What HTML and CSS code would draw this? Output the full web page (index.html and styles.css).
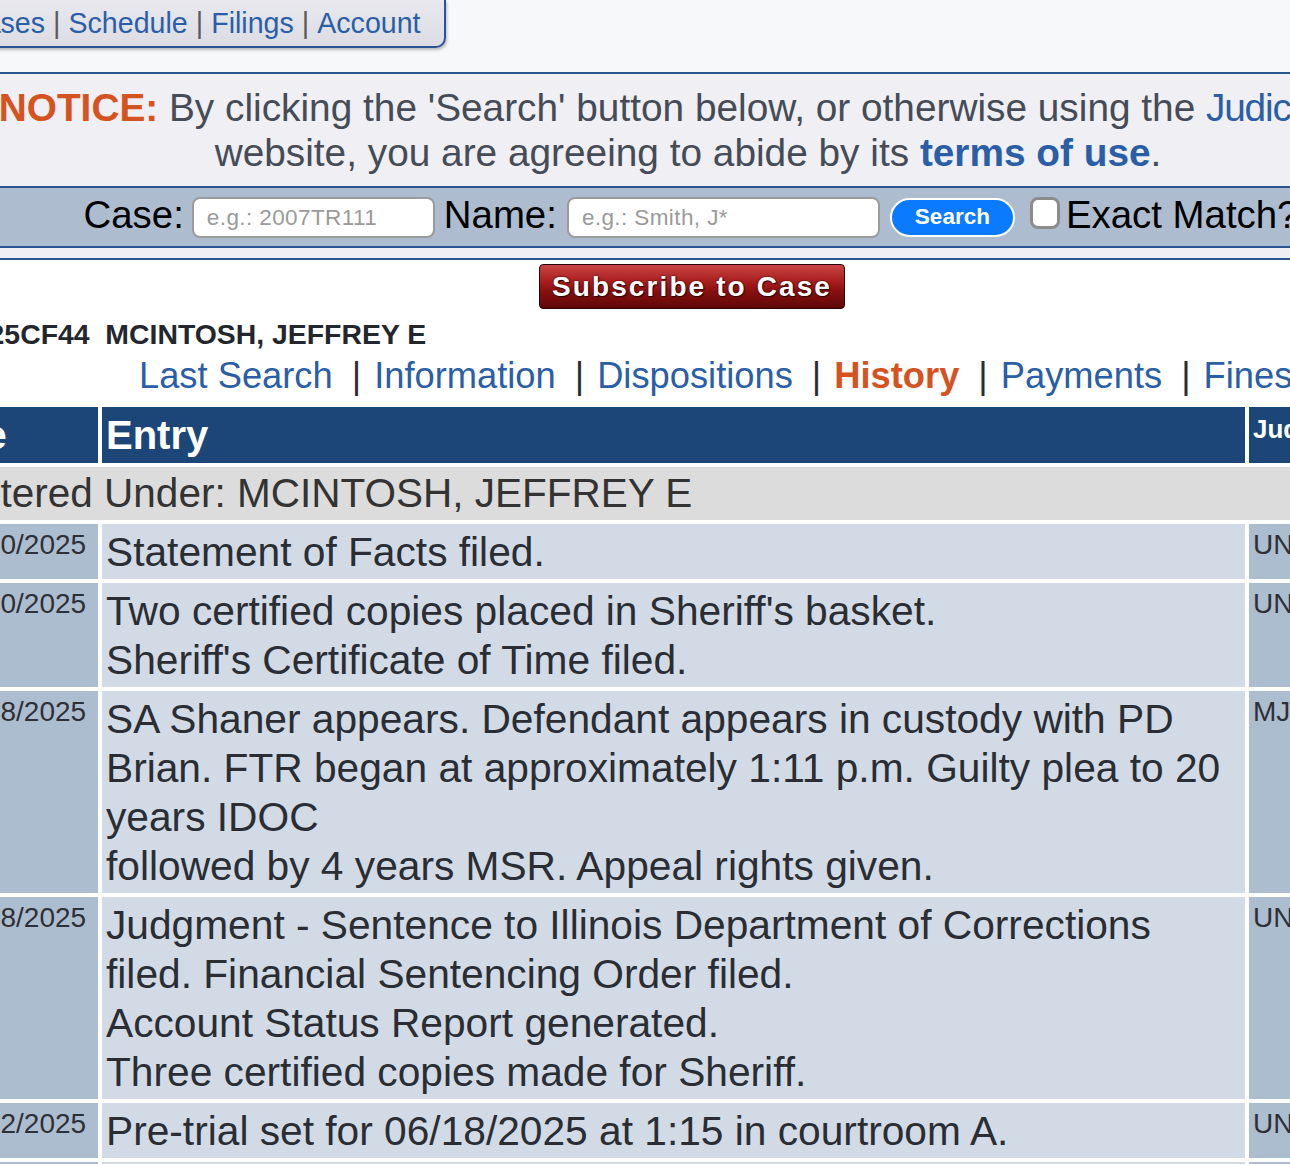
FILE: index.html
```html
<!DOCTYPE html>
<html lang="en">
<head>
<meta charset="utf-8">
<title>Case History</title>
<link rel="stylesheet" href="styles.css">
</head>
<body>
<div class="viewport">
  <div class="page">
    <div class="topbar">
      <div class="tab">
        <a class="toplink">Cases</a><span class="topsep">|</span><a class="toplink">Schedule</a><span class="topsep">|</span><a class="toplink">Filings</a><span class="topsep">|</span><a class="toplink">Account</a>
      </div>
    </div>

    <div class="notice">
      <span class="notice-label">NOTICE:</span> By clicking the 'Search' button below, or otherwise using the <a class="notice-link">Judici.com</a><br>
      website, you are agreeing to abide by its <a class="notice-terms">terms of use</a>.
    </div>

    <form class="searchbar">
      <label class="search-label" for="case">Case:</label>
      <input class="field field-case" id="case" type="text" placeholder="e.g.: 2007TR111">
      <label class="search-label" for="name">Name:</label>
      <input class="field field-name" id="name" type="text" placeholder="e.g.: Smith, J*">
      <button class="search-btn" type="button">Search</button>
      <input class="exact-check" id="exact" type="checkbox">
      <label class="search-label exact-label" for="exact">Exact Match?</label>
    </form>
    <div class="spacer"></div>

    <div class="content">
      <div class="subscribe-row">
        <span class="subscribe">Subscribe to Case</span>
      </div>
      <div class="caseline">2025CF44&nbsp;&nbsp;MCINTOSH, JEFFREY E</div>
      <nav class="casetabs">
        <a class="casetab">Last Search</a><span class="sep">|</span><a class="casetab">Information</a><span class="sep">|</span><a class="casetab">Dispositions</a><span class="sep">|</span><a class="casetab active">History</a><span class="sep">|</span><a class="casetab">Payments</a><span class="sep">|</span><a class="casetab">Fines</a>
      </nav>

      <table class="history">
        <thead>
          <tr>
            <th class="th-date">Date</th>
            <th class="th-entry">Entry</th>
            <th class="th-judge">Judge</th>
          </tr>
        </thead>
        <tbody>
          <tr class="entered">
            <td colspan="3">Entered Under: MCINTOSH, JEFFREY E</td>
          </tr>
          <tr>
            <td class="date">06/10/2025</td>
            <td class="entry">Statement of Facts filed.</td>
            <td class="judge">UNK</td>
          </tr>
          <tr>
            <td class="date">06/10/2025</td>
            <td class="entry">Two certified copies placed in Sheriff's basket.<br>Sheriff's Certificate of Time filed.</td>
            <td class="judge">UNK</td>
          </tr>
          <tr>
            <td class="date">06/18/2025</td>
            <td class="entry">SA Shaner appears. Defendant appears in custody with PD<br>Brian. FTR began at approximately 1:11 p.m. Guilty plea to 20<br>years IDOC<br>followed by 4 years MSR. Appeal rights given.</td>
            <td class="judge">MJM</td>
          </tr>
          <tr>
            <td class="date">06/18/2025</td>
            <td class="entry">Judgment - Sentence to Illinois Department of Corrections<br>filed. Financial Sentencing Order filed.<br>Account Status Report generated.<br>Three certified copies made for Sheriff.</td>
            <td class="judge">UNK</td>
          </tr>
          <tr>
            <td class="date">05/12/2025</td>
            <td class="entry">Pre-trial set for 06/18/2025 at 1:15 in courtroom A.</td>
            <td class="judge">UNK</td>
          </tr>
          <tr>
            <td class="date">05/12/2025</td>
            <td class="entry">Arraignment held.</td>
            <td class="judge">UNK</td>
          </tr>
        </tbody>
      </table>
    </div>
  </div>
</div>
</body>
</html>
```

FILE: styles.css
```css
html, body {
  margin: 0;
  padding: 0;
  background: #ffffff;
}

body {
  font-family: "Liberation Sans", Arial, Helvetica, sans-serif;
  overflow: hidden;
}

.viewport {
  width: 1290px;
  height: 1164px;
  overflow: hidden;
}

/* the page is horizontally scrolled in the reference */
.page {
  width: 1496px;
  margin-left: -60px;
}

/* ---------- top tab ---------- */
.topbar {
  height: 72px;
  background: #f7f8fa;
  border-bottom: 2px solid #2b5592;
}

.tab {
  display: inline-flex;
  align-items: center;
  height: 46px;
  padding: 0 23px 0 24px;
  background: linear-gradient(#e8e8ee, #dcdce4);
  border-right: 2px solid #2b5592;
  border-bottom: 2px solid #2b5592;
  border-bottom-right-radius: 10px;
  box-shadow: 1px 2px 3px rgba(0, 0, 0, 0.25);
  font-size: 28.6px;
  white-space: nowrap;
}

.toplink {
  color: #2a5ea6;
}

.topsep {
  color: #5a5a5a;
  margin: 0 8px;
}

/* ---------- notice ---------- */
.notice {
  background: #efeff4;
  text-align: center;
  font-size: 38.8px;
  line-height: 45px;
  color: #454c57;
  padding: 11px 0;
  white-space: nowrap;
  border-bottom: 2px solid #2b5592;
}

.notice-label {
  color: #d4531f;
  font-weight: bold;
}

.notice-link {
  color: #2a5ea6;
  letter-spacing: -1.2px;
}

.notice-terms {
  color: #2a5ea6;
  font-weight: bold;
}

/* ---------- search bar ---------- */
.searchbar {
  margin: 0;
  height: 58px;
  background: #adbdcf;
  border-bottom: 2px solid #2b5592;
  display: flex;
  align-items: center;
  justify-content: center;
  white-space: nowrap;
  padding-left: 6px;
}

.search-label {
  font-size: 38.4px;
  color: #000;
  margin-bottom: 4px;
}

.field {
  -webkit-appearance: none;
  appearance: none;
  box-sizing: border-box;
  height: 41px;
  border: 2px solid #9b9b9b;
  border-radius: 8px;
  background: #fff;
  padding: 2px 12px 0 13px;
  font-family: "Liberation Sans", Arial, sans-serif;
  font-size: 22.5px;
  letter-spacing: 0.4px;
  color: #333;
  outline: none;
}

.field::placeholder {
  color: #9a9a9a;
}

.field-case {
  width: 243px;
  margin: 0 9px 0 8px;
}

.field-name {
  width: 313px;
  margin: 0 10px 0 10px;
}

.search-btn {
  box-sizing: border-box;
  width: 125px;
  height: 39px;
  border: 2px solid #ffffff;
  border-radius: 20px;
  background: #0a7aff;
  color: #ffffff;
  font-family: "Liberation Sans", Arial, sans-serif;
  font-weight: bold;
  font-size: 22.5px;
  padding: 0;
  margin-right: 15px;
}

.exact-check {
  -webkit-appearance: none;
  appearance: none;
  box-sizing: border-box;
  width: 30px;
  height: 32px;
  margin: 0 6px 8px 0;
  border: 3px solid #8c8c8c;
  border-radius: 8px;
  background: #ffffff;
}

.spacer {
  height: 10px;
  background: #efeff4;
  border-bottom: 2px solid #2b5592;
}

/* ---------- case content ---------- */
.content {
  background: #ffffff;
}

.subscribe-row {
  padding: 4px 0 0 8px;
  text-align: center;
}

.subscribe {
  display: inline-block;
  box-sizing: border-box;
  width: 306px;
  height: 45px;
  line-height: 43px;
  border: 1px solid #2a0404;
  border-radius: 4px;
  background: linear-gradient(#c84545 0%, #a81c1c 40%, #8a1010 60%, #5e0808 100%);
  color: #ffffff;
  font-weight: bold;
  font-size: 28px;
  letter-spacing: 2.1px;
  text-shadow: 0 0 2px #2a0000, 1px 1px 1px #2a0000;
}

.caseline {
  margin-top: 9px;
  padding-left: 17px;
  font-size: 28.4px;
  line-height: 32px;
  font-weight: bold;
  color: #23272d;
  white-space: nowrap;
}

.casetabs {
  margin-top: 5px;
  padding-left: 199px;
  font-size: 36.3px;
  line-height: 41px;
  white-space: nowrap;
}

.casetab {
  color: #2a5ea6;
}

.casetab.active {
  color: #d4531f;
  font-weight: bold;
}

.sep {
  color: #2a2e33;
  margin: 0 13px 0 19px;
}

/* ---------- history table ---------- */
.history {
  margin: 7px 0 0 4px;
  width: 1489px;
  table-layout: fixed;
  border-collapse: separate;
  border-spacing: 4px;
}

.history th,
.history td {
  box-sizing: border-box;
}

.history th {
  height: 56px;
  background: #1b4677;
  color: #ffffff;
  font-weight: bold;
  font-size: 40px;
  text-align: left;
  padding: 0 4px;
  white-space: nowrap;
  overflow: hidden;
}

.th-date {
  width: 150px;
  text-indent: -32px;
}

.th-entry {
  width: 1143px;
}

.th-judge {
  width: 180px;
  vertical-align: top;
  font-size: 26px !important;
  padding-top: 7px !important;
}

.entered td {
  background: #dcdcdc;
  color: #333333;
  font-size: 40.5px;
  line-height: 47px;
  padding: 3px;
  white-space: nowrap;
}

.date,
.judge {
  background: #adbdd0;
  color: #2d3137;
  font-size: 28px;
  line-height: 32px;
  vertical-align: top;
  padding: 5px 4px;
  white-space: nowrap;
  overflow: hidden;
}

.date {
  padding-left: 0;
  text-indent: -2px;
}

.entry {
  background: #d1dae5;
  color: #2a2e34;
  font-size: 40.7px;
  line-height: 49px;
  vertical-align: top;
  padding: 4px 4px 2px;
}
```
